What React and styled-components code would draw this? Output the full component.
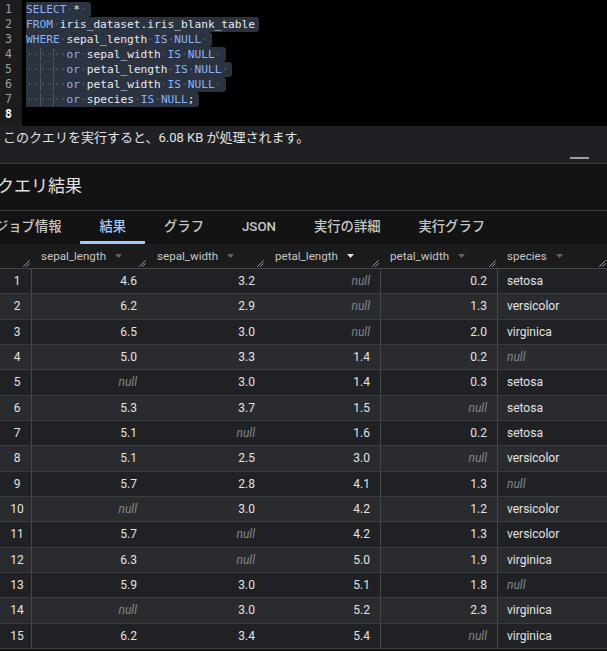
import React from 'react';
import styled, { createGlobalStyle } from 'styled-components';

const GlobalStyle = createGlobalStyle`
  html, body { margin: 0; padding: 0; background: #131314; }
  body { font-family: Roboto, "Noto Sans CJK JP", sans-serif; overflow: hidden; }
  * { box-sizing: border-box; }
`;

const Page = styled.div`
  width: 607px;
  height: 651px;
  overflow: hidden;
  background: #131314;
  display: flex;
  flex-direction: column;
`;

/* ---------- editor ---------- */
const Editor = styled.div`
  display: flex;
  height: 126px;
  flex-shrink: 0;
  background: #000;
`;
const Gutter = styled.div`
  width: 22px;
  background: #1c1c1c;
  padding-top: 2px;
`;
const LineNo = styled.div`
  height: 15px;
  line-height: 15px;
  padding-left: 5px;
  font-family: "DejaVu Sans Mono", monospace;
  font-size: 11.5px;
  color: ${p => (p.$current ? '#ffffff' : '#9e9e9e')};
  font-weight: ${p => (p.$current ? 700 : 400)};
`;
const Code = styled.div`
  flex: 1;
  padding: 2px 0 0 4px;
  font-family: "DejaVu Sans Mono", monospace;
  font-size: 11.2px;
`;
const CodeLine = styled.div`
  height: 15px;
  line-height: 15px;
  white-space: pre;
  display: flex;
`;
const Selection = styled.span`
  background: #2b3240;
  padding-right: 4px;
  border-radius: 0 3px 3px 0;
`;
const tokColors = { kw: '#8ab4f8', id: '#e8eaed', ws: '#586070' };
const Tok = styled.span`
  color: ${p => tokColors[p.$t]};
  ${p => (p.$guide ? 'box-shadow: inset 1px 0 0 #4d5463;' : '')}
`;

/* ---------- info bar ---------- */
const InfoBar = styled.div`
  height: 38px;
  flex-shrink: 0;
  background: #1f2023;
  border-bottom: 1px solid #3c4043;
  display: flex;
  flex-direction: column;
  justify-content: space-between;
  padding: 2px 18px 4px 3px;
`;
const InfoText = styled.div`
  font-size: 13px;
  line-height: 20px;
  color: #e3e3e3;
  white-space: nowrap;
`;
const DragHandle = styled.div`
  align-self: flex-end;
  width: 19px;
  height: 2px;
  background: #9aa0a6;
`;

/* ---------- results header / tabs ---------- */
const ResultsTitle = styled.div`
  height: 47px;
  flex-shrink: 0;
  border-bottom: 1px solid #3c4043;
  font-size: 17px;
  line-height: 45px;
  color: #e3e3e3;
  margin-left: -3px;
  white-space: nowrap;
`;
const TabBar = styled.div`
  height: 33px;
  flex-shrink: 0;
  display: flex;
  margin-left: -24px;
`;
const Tab = styled.div`
  height: 33px;
  padding: 0 19px;
  line-height: 32px;
  font-size: 13.3px;
  font-weight: 500;
  white-space: nowrap;
  color: ${p => (p.$active ? '#a8c7fa' : '#c4c7c5')};
  border-bottom: 3px solid ${p => (p.$active ? '#a8c7fa' : 'transparent')};
  border-radius: 0 0 1px 1px;
`;

/* ---------- table ---------- */
const COLS = '31px 116px 118px 115px 117px 110px';

const HeaderRow = styled.div`
  display: grid;
  grid-template-columns: ${COLS};
  height: 25px;
  flex-shrink: 0;
  background: #1b1b1c;
  border-bottom: 1px solid #45474a;
`;
const HeaderCell = styled.div`
  display: flex;
  align-items: center;
  padding-left: ${p => (p.$first ? 0 : 10)}px;
  min-width: 0;
`;
const HeaderLabel = styled.span`
  font-size: 11.6px;
  color: #c4c7c5;
  white-space: nowrap;
`;
const SortArrow = styled.svg`
  margin-left: 9px;
  flex-shrink: 0;
`;
const Grip = styled.svg`
  margin-left: auto;
  margin-right: 1px;
  margin-bottom: 1px;
  align-self: flex-end;
  flex-shrink: 0;
`;

const Body = styled.div`
  display: flex;
  flex-direction: column;
`;
const Row = styled.div`
  display: grid;
  grid-template-columns: ${COLS};
  height: 25.33px;
  flex-shrink: 0;
  background: ${p => (p.$even ? '#2a2b2e' : '#202124')};
  border-bottom: 1px solid #3c3d40;
`;
const Cell = styled.div`
  display: flex;
  align-items: center;
  justify-content: ${p => (p.$align === 'right' ? 'flex-end' : p.$align === 'center' ? 'center' : 'flex-start')};
  padding: ${p => (p.$align === 'right' ? '0 10px 0 0' : p.$align === 'center' ? '0 0 0 2px' : '0 0 0 9px')};
  border-left: 1px solid ${p => (p.$border ? '#45474a' : 'transparent')};
  font-size: 12px;
  color: ${p => (p.$null ? '#80868b' : '#e3e3e3')};
  font-style: ${p => (p.$null ? 'italic' : 'normal')};
  white-space: nowrap;
`;

/* ---------- data ---------- */
const codeLines = [
  [['kw', 'SELECT'], ['ws', '·'], ['id', '*'], ['ws', '·']],
  [['kw', 'FROM'], ['ws', '·'], ['id', 'iris_dataset.iris_blank_table']],
  [['kw', 'WHERE'], ['ws', '·'], ['id', 'sepal_length'], ['ws', '·'], ['kw', 'IS'], ['ws', '·'], ['kw', 'NULL'], ['ws', '·']],
  ['indent', ['kw', 'or'], ['ws', '·'], ['id', 'sepal_width'], ['ws', '·'], ['kw', 'IS'], ['ws', '·'], ['kw', 'NULL'], ['ws', '·']],
  ['indent', ['kw', 'or'], ['ws', '·'], ['id', 'petal_length'], ['ws', '·'], ['kw', 'IS'], ['ws', '·'], ['kw', 'NULL'], ['ws', '·']],
  ['indent', ['kw', 'or'], ['ws', '·'], ['id', 'petal_width'], ['ws', '·'], ['kw', 'IS'], ['ws', '·'], ['kw', 'NULL'], ['ws', '·']],
  ['indent', ['kw', 'or'], ['ws', '·'], ['id', 'species'], ['ws', '·'], ['kw', 'IS'], ['ws', '·'], ['kw', 'NULL'], ['id', ';']],
];

const columns = [
  { name: 'sepal_length', align: 'right', border: true },
  { name: 'sepal_width', align: 'right', border: false },
  { name: 'petal_length', align: 'right', border: false, sorted: true },
  { name: 'petal_width', align: 'right', border: true },
  { name: 'species', align: 'left', border: true },
];

const rows = [
  ['4.6', '3.2', null, '0.2', 'setosa'],
  ['6.2', '2.9', null, '1.3', 'versicolor'],
  ['6.5', '3.0', null, '2.0', 'virginica'],
  ['5.0', '3.3', '1.4', '0.2', null],
  [null, '3.0', '1.4', '0.3', 'setosa'],
  ['5.3', '3.7', '1.5', null, 'setosa'],
  ['5.1', null, '1.6', '0.2', 'setosa'],
  ['5.1', '2.5', '3.0', null, 'versicolor'],
  ['5.7', '2.8', '4.1', '1.3', null],
  [null, '3.0', '4.2', '1.2', 'versicolor'],
  ['5.7', null, '4.2', '1.3', 'versicolor'],
  ['6.3', null, '5.0', '1.9', 'virginica'],
  ['5.9', '3.0', '5.1', '1.8', null],
  [null, '3.0', '5.2', '2.3', 'virginica'],
  ['6.2', '3.4', '5.4', null, 'virginica'],
];

const tabs = ['ジョブ情報', '結果', 'グラフ', 'JSON', '実行の詳細', '実行グラフ'];

const GripIcon = () => (
  <Grip width="7" height="7" viewBox="0 0 7 7">
    <line x1="0.3" y1="6.7" x2="6.7" y2="0.3" stroke="#9aa0a6" strokeWidth="1" />
    <line x1="3.3" y1="6.7" x2="6.7" y2="3.3" stroke="#9aa0a6" strokeWidth="1" />
  </Grip>
);

const Arrow = ({ bright }) => (
  <SortArrow width="7" height="4" viewBox="0 0 7 4">
    <polygon points="0,0 7,0 3.5,4" fill={bright ? '#e3e3e3' : '#5f6368'} />
  </SortArrow>
);

function renderLine(tokens, i) {
  const parts = [];
  tokens.forEach((t, j) => {
    if (t === 'indent') {
      for (let k = 0; k < 6; k++) {
        parts.push(
          <Tok key={`i${k}`} $t="ws" $guide={k === 2 || k === 4}>·</Tok>
        );
      }
    } else {
      parts.push(<Tok key={j} $t={t[0]}>{t[1]}</Tok>);
    }
  });
  return (
    <CodeLine key={i}>
      <Selection>{parts}</Selection>
    </CodeLine>
  );
}

export default function App() {
  return (
    <>
      <GlobalStyle />
      <Page>
        <Editor>
          <Gutter>
            {[1, 2, 3, 4, 5, 6, 7, 8].map(n => (
              <LineNo key={n} $current={n === 8}>{n}</LineNo>
            ))}
          </Gutter>
          <Code>
            {codeLines.map(renderLine)}
            <CodeLine />
          </Code>
        </Editor>

        <InfoBar>
          <InfoText>このクエリを実行すると、6.08 KB が処理されます。</InfoText>
          <DragHandle />
        </InfoBar>

        <ResultsTitle>クエリ結果</ResultsTitle>

        <TabBar>
          {tabs.map(t => (
            <Tab key={t} $active={t === '結果'}>{t}</Tab>
          ))}
        </TabBar>

        <HeaderRow>
          <HeaderCell $first>
            <GripIcon />
          </HeaderCell>
          {columns.map(c => (
            <HeaderCell key={c.name}>
              <HeaderLabel>{c.name}</HeaderLabel>
              <Arrow bright={c.sorted} />
              <GripIcon />
            </HeaderCell>
          ))}
        </HeaderRow>

        <Body>
          {rows.map((r, i) => (
            <Row key={i} $even={i % 2 === 1}>
              <Cell $align="center">{i + 1}</Cell>
              {r.map((v, j) => (
                <Cell
                  key={j}
                  $align={columns[j].align}
                  $border={columns[j].border}
                  $null={v === null}
                >
                  {v === null ? 'null' : v}
                </Cell>
              ))}
            </Row>
          ))}
        </Body>
      </Page>
    </>
  );
}
